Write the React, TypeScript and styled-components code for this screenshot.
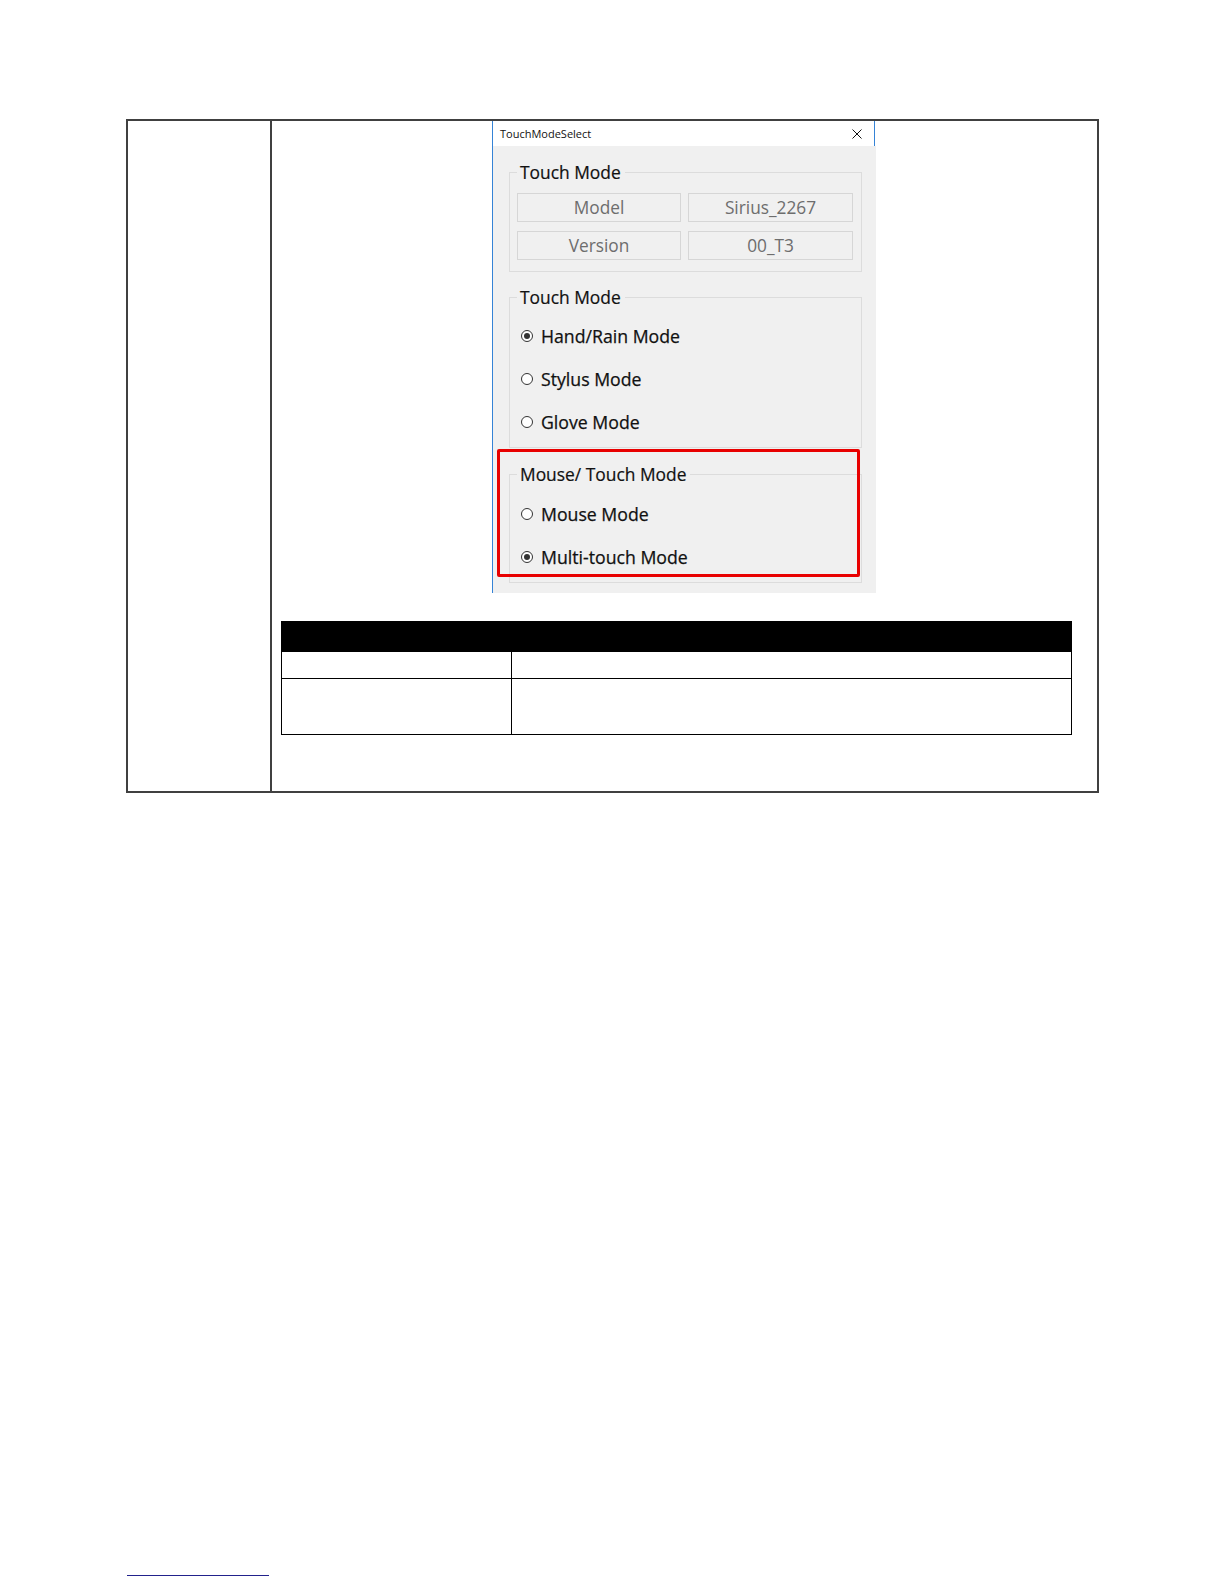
import React from "react";
import styled, { createGlobalStyle, css } from "styled-components";

const GlobalStyle = createGlobalStyle`
  html, body {
    margin: 0;
    padding: 0;
    background: #ffffff;
  }
  body {
    font-family: "Open Sans", "Liberation Sans", sans-serif;
  }
`;

const Page = styled.div`
  width: 1224px;
  min-height: 1584px;
  padding: 119px 0 0 126px;
  box-sizing: border-box;
`;

const OuterTable = styled.div`
  display: grid;
  grid-template-columns: 144px 825px;
  width: 973px;
  height: 674px;
  border: 2px solid #404040;
  box-sizing: border-box;
`;

const LeftCell = styled.div`
  border-right: 2px solid #404040;
`;

const RightCell = styled.div`
  display: flex;
  flex-direction: column;
  align-items: center;
`;

const Dialog = styled.div`
  width: 384px;
  margin-right: 1px;
  border-left: 1px solid #3583d6;
  box-sizing: border-box;
`;

const TitleBar = styled.div`
  height: 25px;
  display: flex;
  align-items: center;
  justify-content: space-between;
  padding: 0 12px 0 7px;
  background: #ffffff;
  border-right: 1px solid #3583d6;
  margin-right: 1px;
`;

const Title = styled.span`
  font-size: 11px;
  color: #111111;
`;

const DialogBody = styled.div`
  position: relative;
  background: #f0f0f0;
  padding: 15px 14px 10px 16px;
  display: flex;
  flex-direction: column;
`;

const GroupBox = styled.fieldset<{ $gap?: number; $top?: number }>`
  margin: ${(p) => p.$gap ?? 0}px 0 0 0;
  padding: ${(p) => p.$top ?? 10}px 7px ${(p) => (p.$top ? 4 : 11)}px;
  border: 1px solid #dcdcdc;
  min-width: 0;
`;

const Legend = styled.legend`
  padding: 0 4px 0 3px;
  font-size: 17.4px;
  line-height: 22px;
  color: #111111;
  -webkit-text-stroke: 0.2px #111111;
`;

const InfoGrid = styled.div`
  display: grid;
  grid-template-columns: 164px 165px;
  gap: 9px 7px;
`;

const InfoCell = styled.div`
  height: 29px;
  box-sizing: border-box;
  border: 1px solid #d6d6d6;
  display: flex;
  align-items: center;
  justify-content: center;
  font-size: 17.3px;
  color: #6d6d6d;
`;

const RadioRow = styled.div`
  height: 43px;
  display: flex;
  align-items: center;
  gap: 8px;
  padding-left: 4px;
  font-size: 17.7px;
  color: #111111;
  -webkit-text-stroke: 0.25px #111111;
`;

const RadioDot = styled.span<{ $checked?: boolean }>`
  position: relative;
  width: 12px;
  height: 12px;
  border: 1px solid #333333;
  border-radius: 50%;
  background: #ffffff;
  box-sizing: border-box;
  flex-shrink: 0;
  ${(p) =>
    p.$checked &&
    css`
      &::after {
        content: "";
        position: absolute;
        left: 2px;
        top: 2px;
        width: 6px;
        height: 6px;
        border-radius: 50%;
        background: #333333;
      }
    `}
`;

const Highlight = styled.div`
  position: absolute;
  left: 4px;
  top: 303px;
  width: 363px;
  height: 128px;
  border: 3px solid #e80000;
  border-radius: 2px;
  box-sizing: border-box;
  pointer-events: none;
`;

const InfoTable = styled.table`
  align-self: flex-start;
  margin: 28px 0 0 9px;
  width: 791px;
  border-collapse: collapse;
  table-layout: fixed;
`;

const HeadCell = styled.th`
  height: 29px;
  padding: 0;
  background: #000000;
  border: 1px solid #000000;
`;

const BodyCell = styled.td<{ $h: number }>`
  height: ${(p) => p.$h}px;
  padding: 0;
  border: 1px solid #000000;
`;

const FootRule = styled.div`
  margin: 782px 0 0 1px;
  width: 142px;
  height: 1px;
  background: #22228c;
`;

const CloseIcon = () => (
  <svg width="10" height="10" viewBox="0 0 10 10">
    <path d="M0.5 0.5 L9.5 9.5 M9.5 0.5 L0.5 9.5" stroke="#111" strokeWidth="1" />
  </svg>
);

const Radio = ({ label, checked }: { label: string; checked?: boolean }) => (
  <RadioRow>
    <RadioDot $checked={checked} />
    <span>{label}</span>
  </RadioRow>
);

const App = () => {
  return (
    <Page>
      <GlobalStyle />
      <OuterTable>
        <LeftCell />
        <RightCell>
          <Dialog>
            <TitleBar>
              <Title>TouchModeSelect</Title>
              <CloseIcon />
            </TitleBar>
            <DialogBody>
              <GroupBox>
                <Legend>Touch Mode</Legend>
                <InfoGrid>
                  <InfoCell>Model</InfoCell>
                  <InfoCell>Sirius_2267</InfoCell>
                  <InfoCell>Version</InfoCell>
                  <InfoCell>00_T3</InfoCell>
                </InfoGrid>
              </GroupBox>
              <GroupBox $gap={14} $top={6}>
                <Legend>Touch Mode</Legend>
                <Radio label="Hand/Rain Mode" checked />
                <Radio label="Stylus Mode" />
                <Radio label="Glove Mode" />
              </GroupBox>
              <GroupBox $gap={15} $top={7}>
                <Legend>Mouse/ Touch Mode</Legend>
                <Radio label="Mouse Mode" />
                <Radio label="Multi-touch Mode" checked />
              </GroupBox>
              <Highlight />
            </DialogBody>
          </Dialog>
          <InfoTable>
            <colgroup>
              <col style={{ width: 230 }} />
              <col />
            </colgroup>
            <thead>
              <tr>
                <HeadCell colSpan={2} />
              </tr>
            </thead>
            <tbody>
              <tr>
                <BodyCell $h={26} />
                <BodyCell $h={26} />
              </tr>
              <tr>
                <BodyCell $h={55} />
                <BodyCell $h={55} />
              </tr>
            </tbody>
          </InfoTable>
        </RightCell>
      </OuterTable>
      <FootRule />
    </Page>
  );
};

export default App;
